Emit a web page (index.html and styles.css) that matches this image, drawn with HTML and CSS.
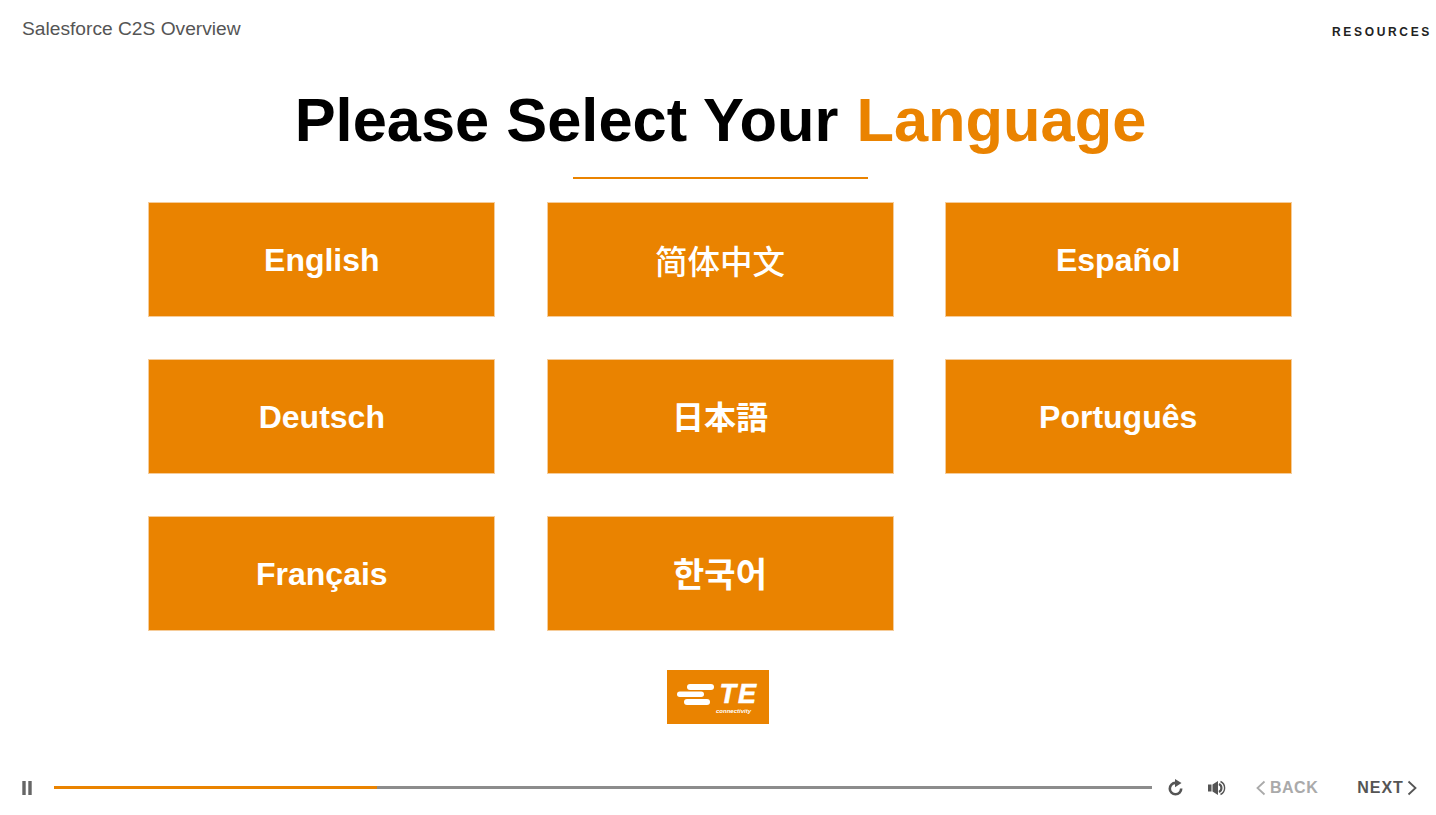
FILE: index.html
```html
<!DOCTYPE html>
<html lang="en">
<head>
<meta charset="UTF-8">
<meta name="viewport" content="width=device-width, initial-scale=1.0">
<title>Salesforce C2S Overview</title>
<link rel="stylesheet" href="styles.css">
</head>
<body>

<div class="player">
  <div class="topbar">
    <div class="course-title">Salesforce C2S Overview</div>
    <div class="resources">RESOURCES</div>
  </div>

  <div class="slide">
    <h1>Please Select Your <span class="accent">Language</span></h1>
    <div class="rule"></div>

    <div class="lang-grid">
      <div class="lang-btn">English</div>
      <div class="lang-btn cjk" lang="zh-CN">简体中文</div>
      <div class="lang-btn">Español</div>
      <div class="lang-btn">Deutsch</div>
      <div class="lang-btn cjk-jp" lang="ja">日本語</div>
      <div class="lang-btn">Português</div>
      <div class="lang-btn">Français</div>
      <div class="lang-btn cjk-kr" lang="ko">한국어</div>
    </div>

    <div class="logo">
      <svg class="logo-mark" width="37" height="21" viewBox="0 0 37 21">
        <rect x="10" y="0" width="27" height="6" rx="3" fill="#fff"/>
        <rect x="0" y="7.5" width="27" height="5.5" rx="2.75" fill="#fff"/>
        <rect x="7" y="15" width="26" height="6" rx="3" fill="#fff"/>
      </svg>
      <div class="logo-text">
        <span class="logo-te">TE</span>
        <span class="logo-sub">connectivity</span>
      </div>
    </div>
  </div>

  <div class="controls">
    <svg class="pause" width="10" height="14" viewBox="0 0 10 14">
      <rect x="0.3" y="0" width="3.4" height="14" fill="#666"/>
      <rect x="6.3" y="0" width="3.4" height="14" fill="#666"/>
    </svg>
    <div class="progress"><div class="progress-fill"></div></div>
    <svg class="icon-replay" width="16" height="18" viewBox="0 0 16 18">
      <path d="M13.2 9.5A5.7 5.7 0 1 1 7.5 3.9" fill="none" stroke="#555" stroke-width="2.6"/>
      <path d="M7 0L13.5 4L7 8.2Z" fill="#555"/>
    </svg>
    <svg class="icon-volume" width="18" height="16" viewBox="0 0 18 16">
      <path d="M0 4.5H3.5V11.5H0Z" fill="#555"/>
      <path d="M4.5 4.5L10 1V15L4.5 11.5Z" fill="#555"/>
      <path d="M11 4A4.5 4.5 0 0 1 11 12" fill="none" stroke="#555" stroke-width="2.2"/>
      <path d="M12.5 1.5A7.2 7.2 0 0 1 12.5 14.5" fill="none" stroke="#555" stroke-width="1.4"/>
    </svg>
    <div class="nav-btn back">
      <svg width="10" height="16" viewBox="0 0 10 16"><path d="M8.5 1.5L1.5 8L8.5 14.5" fill="none" stroke="#aaa" stroke-width="1.8"/></svg>
      <span>BACK</span>
    </div>
    <div class="nav-btn next">
      <span>NEXT</span>
      <svg width="10" height="16" viewBox="0 0 10 16"><path d="M1.5 1.5L8.5 8L1.5 14.5" fill="none" stroke="#555" stroke-width="1.8"/></svg>
    </div>
  </div>
</div>

</body>
</html>
```

FILE: styles.css
```css
html, body { height: 100%; margin: 0; padding: 0; }
body { font-family: "Liberation Sans", Arial, sans-serif; background: #fff; overflow: hidden; }
.player { height: 815px; display: flex; flex-direction: column; }

.topbar { height: 59px; display: flex; justify-content: space-between; align-items: flex-start; box-sizing: border-box; padding: 18px 4px 0 22px; }
.course-title { font-size: 19.2px; line-height: 22px; color: #555; }
.resources { font-size: 12px; font-weight: bold; letter-spacing: 2.67px; line-height: 14px; color: #222; margin-top: 7px; }

.slide { flex: 1; display: flex; flex-direction: column; align-items: center; padding-left: 5px; }
h1 { margin: 0; font-size: 61.4px; line-height: 72px; font-weight: bold; color: #000; padding-top: 25px; }
.accent { color: #ea8300; margin-left: 1px; }
.rule { width: 295px; height: 2px; background: #ea8300; margin-top: 21px; }

.lang-grid { display: grid; grid-template-columns: repeat(3, 347px); grid-auto-rows: 115px; column-gap: 51.2px; row-gap: 42px; margin-top: 23px; margin-left: -1px; }
.lang-btn { background: #ea8300; border: 1px solid #f6cc99; box-sizing: border-box; color: #fff; font-size: 32px; font-weight: bold; padding-top: 2px; display: flex; align-items: center; justify-content: center; }
.cjk { font-family: "Noto Sans CJK SC", sans-serif; font-size: 32.5px; font-weight: 500; padding-top: 0; padding-bottom: 1px; }
.cjk-jp { font-family: "Noto Sans CJK JP", sans-serif; font-size: 32px; padding-top: 0; padding-bottom: 4px; }
.cjk-kr { font-family: "Noto Sans CJK KR", sans-serif; font-size: 34px; padding-top: 0; padding-bottom: 2px; }

.logo { width: 102px; height: 54px; background: #ea8300; margin-top: 39px; margin-left: -5px; display: flex; align-items: flex-start; box-sizing: border-box; padding: 14px 0 0 10px; }
.logo-mark { flex: none; }
.logo-text { display: flex; flex-direction: column; align-items: flex-end; margin-left: 2px; margin-top: -3px; }
.logo-te { font-size: 27px; line-height: 26px; font-weight: bold; font-style: italic; letter-spacing: 2px; color: #fff; -webkit-text-stroke: 0.6px #fff; }
.logo-sub { font-size: 6px; line-height: 8px; font-weight: bold; font-style: italic; color: #fff; margin-right: 7px; white-space: nowrap; }

.controls { height: 57px; display: flex; align-items: center; box-sizing: border-box; padding: 2px 0 0 22px; }
.controls > * { flex: none; }
.pause { margin-right: 22px; }
.progress { width: 1098px; height: 3px; background: #8c8c8c; }
.progress-fill { width: 323px; height: 3px; background: #ea8300; }
.icon-replay { margin-left: 16px; }
.icon-volume { margin-left: 24px; }
.nav-btn { display: flex; align-items: center; font-size: 16px; font-weight: bold; }
.back { color: #aaa; gap: 4px; letter-spacing: 0.5px; margin-left: 30px; }
.next { color: #555; gap: 3px; letter-spacing: 1px; margin-left: 39px; }
```
